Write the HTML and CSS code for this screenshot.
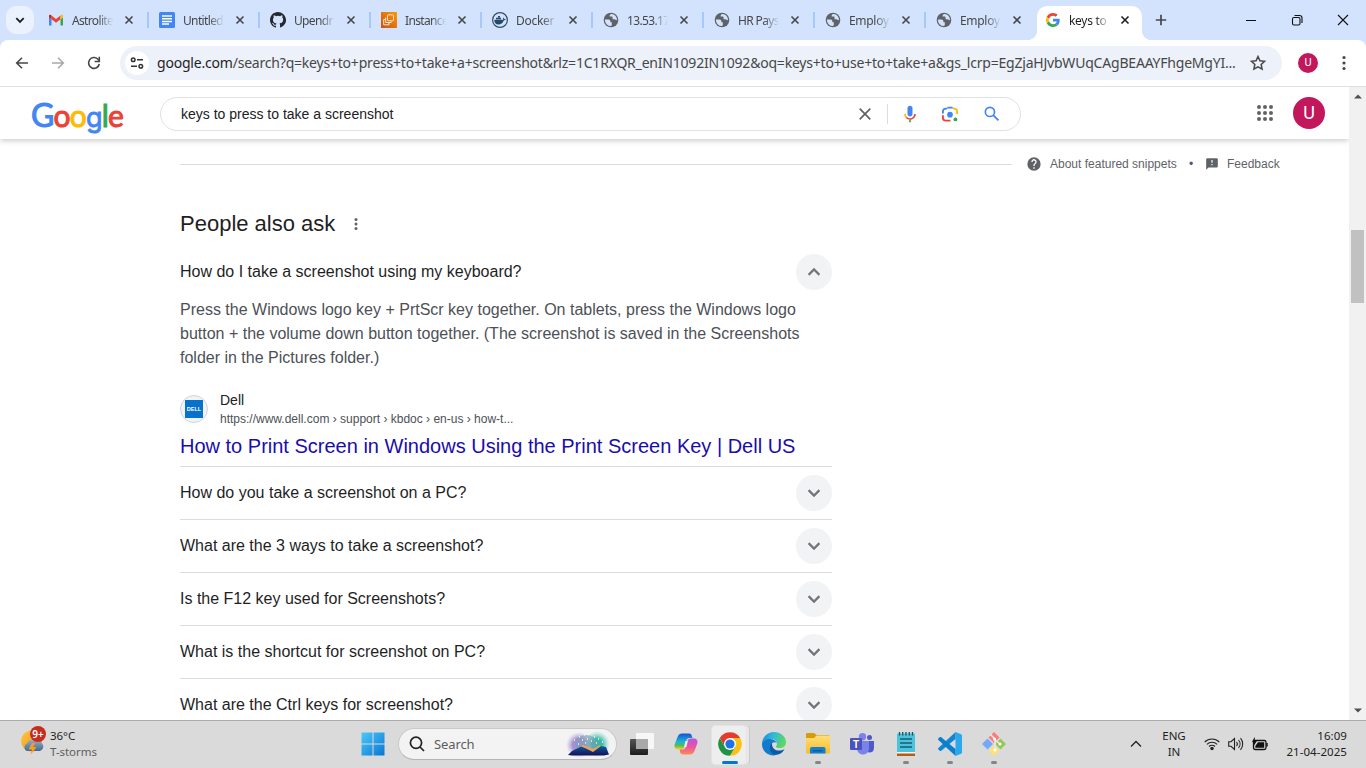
FILE: index.html
```html
<!DOCTYPE html>
<html lang="en">
<head>
<meta charset="utf-8">
<title>keys to press to take a screenshot - Google Search</title>
<link rel="stylesheet" href="styles.css">
</head>
<body>
<svg class="defs" width="0" height="0" aria-hidden="true">
  <defs>
    <symbol id="globe" viewBox="0 0 16 16"><circle cx="8" cy="8" r="7.300" fill="#5f6368"/><path d="M1.900 7.600h3.500c1.400 0 2 .9 2 2v.6h1.400v2.600c0 .5-.3 1-.8 1.300A6.100 6.100 0 0 1 1.900 7.600z" fill="#d3e3fd"/><path d="M8.600 2c-.9 0-1.900.6-1.900 1.600v1h1.700c.8 0 1.200.5 1.200 1.200v1.400h1.900c.6 0 1 .4 1.300.9.500.4 1 .1 1.200-.5C13.800 4.500 11.500 2.100 8.600 2z" fill="#d3e3fd"/></symbol>
    <symbol id="x" viewBox="0 0 10 10"><path d="M1.500 1.500l7 7m0-7l-7 7" fill="none" stroke="currentColor" stroke-width="1.600"/></symbol>
    <symbol id="gicon" viewBox="0 0 48 48"><path fill="#ea4335" d="M24 9.500c3.540 0 6.710 1.220 9.210 3.600l6.850-6.850C35.900 2.380 30.470 0 24 0 14.620 0 6.510 5.380 2.560 13.220l7.980 6.190C12.430 13.720 17.740 9.500 24 9.500z"/><path fill="#4285f4" d="M46.980 24.550c0-1.570-.15-3.090-.38-4.550H24v9.020h12.940c-.58 2.960-2.260 5.480-4.780 7.180l7.730 6c4.510-4.180 7.090-10.360 7.090-17.650z"/><path fill="#fbbc05" d="M10.530 28.590A14.500 14.500 0 0 1 9.770 24c0-1.600.27-3.140.76-4.590l-7.980-6.190A23.900 23.900 0 0 0 0 24c0 3.880.92 7.540 2.560 10.780z"/><path fill="#34a853" d="M24 48c6.480 0 11.930-2.130 15.890-5.810l-7.730-6c-2.150 1.450-4.920 2.300-8.160 2.300-6.260 0-11.570-4.220-13.470-9.910l-7.980 6.190C6.510 42.620 14.620 48 24 48z"/></symbol>
    <symbol id="chev" viewBox="0 0 24 24"><path fill="#70757a" stroke="#70757a" stroke-width=".4" d="M7.410 8.590L12 13.170l4.590-4.580L18 10l-6 6-6-6z"/></symbol>
  </defs>
</svg>

<header class="tabstrip">
  <button class="tabsearch"><svg width="10" height="10" viewBox="0 0 10 10"><path d="M1.300 3.200L5 6.900l3.700-3.700" fill="none" stroke="#1f1f1f" stroke-width="1.800"/></svg></button>
  <div class="tabs">
    <div class="tab"><svg class="fav" viewBox="0 0 16 16"><path fill="#4285f4" d="M1 13.500h2.500V7.300L1 5.400z"/><path fill="#34a853" d="M12.500 13.500H15V5.400l-2.500 1.900z"/><path fill="#ea4335" d="M3.500 7.300V3.600L8 7l4.500-3.400v3.700L8 10.700z"/><path fill="#c5221f" d="M1 5.400V4c0-1.400 1.500-1.600 2.500-.4v3.700z"/><path fill="#fbbc04" d="M15 5.400V4c0-1.400-1.500-1.600-2.500-.4v3.700z"/></svg><span class="label snug">Astrolite</span><svg class="close"><use href="#x"/></svg></div>
    <div class="tab"><svg class="fav" viewBox="0 0 16 16"><rect width="16" height="16" rx="1.500" fill="#4285f4"/><path d="M3 4h10M3 6.700h10M3 9.400h10M3 12.100h7" stroke="#fff" stroke-width="1.500"/></svg><span class="label snug">Untitled</span><svg class="close"><use href="#x"/></svg></div>
    <div class="tab"><svg class="fav" viewBox="0 0 16 16"><path fill="#24292f" d="M8 0C3.580 0 0 3.580 0 8c0 3.540 2.290 6.530 5.470 7.590.4.070.55-.17.55-.38v-1.490c-2.010.37-2.530-.49-2.690-.94-.09-.23-.48-.94-.82-1.130-.28-.15-.68-.52-.01-.53.630-.010 1.080.58 1.230.82.72 1.210 1.870.87 2.330.66.070-.52.28-.87.510-1.070-1.780-.2-3.640-.89-3.640-3.950 0-.87.310-1.590.82-2.150-.08-.2-.36-1.020.08-2.120 0 0 .67-.21 2.200.82a7.600 7.600 0 0 1 4 0c1.530-1.040 2.200-.82 2.200-.82.44 1.100.16 1.920.08 2.120.51.56.82 1.270.82 2.150 0 3.070-1.870 3.750-3.650 3.950.29.25.54.73.54 1.480v2.190c0 .21.15.46.55.38A8 8 0 0 0 8 0z"/></svg><span class="label snug">Upendr</span><svg class="close"><use href="#x"/></svg></div>
    <div class="tab"><svg class="fav" viewBox="0 0 16 16"><defs><linearGradient id="ec" y1="1" x2="1" y2="0"><stop stop-color="#c8511b"/><stop offset="1" stop-color="#f90"/></linearGradient></defs><rect width="16" height="16" fill="url(#ec)"/><rect x="6.500" y="2.800" width="6" height="6" rx=".8" fill="none" stroke="#ffe6cc"/><path d="M4.700 5.500v5h5.500V9.500M2.700 7.500v5.300h5.300v-2M2.700 7.500h1.500" fill="none" stroke="#ffe6cc"/></svg><span class="label snug">Instance</span><svg class="close"><use href="#x"/></svg></div>
    <div class="tab"><svg class="fav" viewBox="0 0 16 16"><circle cx="8" cy="8" r="7.400" fill="#d3e3fd" stroke="#344e65" stroke-width="1.200"/><path fill="#244a68" d="M2.300 7.700h8.800c.3-.8.100-1.500-.2-2.100.9.200 1.300.8 1.400 1.400.5-.1 1.200 0 1.500.2-.4.800-1.200 1-1.900 1-1.100 3-3 4.200-5.400 4.200-2.700 0-4.300-1.500-4.200-4.700zM4 5.800h5v1.500H4zM6 4h2v1.500H6z"/></svg><span class="label">Docker</span><svg class="close"><use href="#x"/></svg></div>
    <div class="tab"><svg class="fav"><use href="#globe"/></svg><span class="label snug">13.53.17</span><svg class="close"><use href="#x"/></svg></div>
    <div class="tab"><svg class="fav"><use href="#globe"/></svg><span class="label snug">HR Pays</span><svg class="close"><use href="#x"/></svg></div>
    <div class="tab"><svg class="fav"><use href="#globe"/></svg><span class="label">Employ</span><svg class="close"><use href="#x"/></svg></div>
    <div class="tab nosep"><svg class="fav"><use href="#globe"/></svg><span class="label">Employ</span><svg class="close"><use href="#x"/></svg></div>
    <div class="tab active"><svg class="fav g"><use href="#gicon"/></svg><span class="label">keys to</span><svg class="close"><use href="#x"/></svg></div>
  </div>
  <svg class="newtab" width="12" height="12" viewBox="0 0 12 12"><path d="M6 .8v10.400M.8 6h10.400" stroke="#474747" stroke-width="1.700"/></svg>
  <div class="winctl">
    <svg width="12" height="12" viewBox="0 0 12 12"><path d="M1 6.500h10" stroke="#111"/></svg>
    <svg width="12" height="12" viewBox="0 0 12 12"><rect x="1.500" y="3.500" width="7.500" height="7.500" rx="1.500" fill="none" stroke="#111" stroke-width="1.100"/><path d="M3.500 1.500H8.500a2.500 2.500 0 0 1 2.500 2.500v5" fill="none" stroke="#111" stroke-width="1.100"/></svg>
    <svg width="12" height="12" viewBox="0 0 12 12"><path d="M1 1l10 10M11 1L1 11" stroke="#111" stroke-width="1.100"/></svg>
  </div>
</header>

<nav class="toolbar">
  <svg class="nav" viewBox="0 0 16 16"><path d="M14 8H3M8 2.700L2.700 8 8 13.300" fill="none" stroke="#474747" stroke-width="1.600"/></svg>
  <svg class="nav" viewBox="0 0 16 16"><path d="M2 8h11M8 2.700L13.300 8 8 13.300" fill="none" stroke="#a9a9a9" stroke-width="1.600"/></svg>
  <svg class="nav" viewBox="0 0 16 16"><path d="M13.300 9A5.400 5.400 0 1 1 11.900 4.200L13.200 5.500" fill="none" stroke="#474747" stroke-width="1.600"/><path d="M13.300 1.800v4.700H8.600" fill="none" stroke="#474747" stroke-width="1.600"/></svg>
  <div class="omnibox">
    <span class="siteinfo"><svg width="14" height="14" viewBox="0 0 14 14" fill="none" stroke="#333" stroke-width="1.500"><circle cx="3.200" cy="3.800" r="1.800"/><path d="M7 3.800h6M1 10.200h6"/><circle cx="10.800" cy="10.200" r="1.800"/></svg></span>
    <span class="url"><b>google.com</b>/search?q=keys+to+press+to+take+a+screenshot&amp;rlz=1C1RXQR_enIN1092IN1092&amp;oq=keys+to+use+to+take+a&amp;gs_lcrp=EgZjaHJvbWUqCAgBEAAYFhgeMgYI...</span>
    <svg class="star" viewBox="0 0 16 16"><path d="M8 1.500l1.950 4.300 4.650.5-3.450 3.150.95 4.650L8 11.750 3.900 14.100l.95-4.650L1.400 6.300l4.650-.5z" fill="none" stroke="#474747" stroke-width="1.500"/></svg>
  </div>
  <span class="profile">U</span>
  <svg class="menu" width="4" height="16" viewBox="0 0 4 16" fill="#474747"><circle cx="2" cy="2.500" r="1.600"/><circle cx="2" cy="8" r="1.600"/><circle cx="2" cy="13.500" r="1.600"/></svg>
</nav>

<div class="viewport">
  <div class="page">
    <div class="ghead">
      <div class="glogo"><i class="b big">G</i><i class="r">o</i><i class="y">o</i><i class="b low">g</i><i class="gr">l</i><i class="r">e</i></div>
      <div class="gsearch">
        <span class="query">keys to press to take a screenshot</span>
        <svg class="clear" width="14" height="14" viewBox="0 0 14 14"><path d="M1.700 1.700l10.600 10.600m0-10.600L1.700 12.300" stroke="#5f6368" stroke-width="1.700"/></svg>
        <span class="vline"></span>
        <svg class="gi" viewBox="0 0 24 24"><path fill="#4285f4" d="M12 15c1.660 0 3-1.310 3-2.970V5.020C15 3.340 13.660 2 12 2S9 3.340 9 5.020v7.010C9 13.690 10.340 15 12 15z"/><path fill="#34a853" d="M11 18.920h2V22h-2z"/><path fill="#fbbc04" d="M7 12H5c0 1.930.78 3.680 2.050 4.950l1.410-1.410A5 5 0 0 1 7 12z"/><path fill="#ea4335" d="M12 16.950a4.900 4.900 0 0 1-3.540-1.420l-1.410 1.410A7 7 0 0 0 12 19c3.870 0 6.990-3.140 6.990-7h-2a4.970 4.970 0 0 1-4.990 4.950z"/></svg>
        <svg class="gi" viewBox="0 0 24 24" fill="none" stroke-width="2.200"><circle cx="12" cy="12.800" r="3.400" fill="#4285f4"/><path d="M7.800 5.500L9.500 3.200h5l1.700 2.300z" fill="#4285f4"/><path d="M15.500 5.600H17a3.500 3.500 0 0 1 3.500 3.500v3" stroke="#fbbc04"/><path d="M8.500 5.600H7a3.500 3.500 0 0 0-3.500 3.500v2.400" stroke="#4285f4"/><path d="M3.500 13.500v3A3.500 3.500 0 0 0 7 20h5.500" stroke="#ea4335"/><circle cx="18.500" cy="18.500" r="2.300" fill="#34a853"/></svg>
        <svg class="gi" viewBox="0 0 24 24"><path fill="#4285f4" d="M20.490 19l-5.730-5.730C15.530 12.200 16 10.910 16 9.500A6.500 6.500 0 1 0 9.500 16c1.410 0 2.700-.47 3.770-1.240L19 20.490 20.490 19zM5 9.500a4.500 4.500 0 1 1 9 0 4.500 4.500 0 0 1-9 0z"/></svg>
      </div>
      <svg class="apps" width="24" height="24" viewBox="0 0 24 24" fill="#5f6368"><path d="M6 8a2 2 0 1 0 0-4 2 2 0 0 0 0 4zm6 0a2 2 0 1 0 0-4 2 2 0 0 0 0 4zm6 0a2 2 0 1 0 0-4 2 2 0 0 0 0 4zM6 14a2 2 0 1 0 0-4 2 2 0 0 0 0 4zm6 0a2 2 0 1 0 0-4 2 2 0 0 0 0 4zm6 0a2 2 0 1 0 0-4 2 2 0 0 0 0 4zM6 20a2 2 0 1 0 0-4 2 2 0 0 0 0 4zm6 0a2 2 0 1 0 0-4 2 2 0 0 0 0 4zm6 0a2 2 0 1 0 0-4 2 2 0 0 0 0 4z"/></svg>
      <span class="avatar">U</span>
    </div>

    <div class="snipbar">
      <span class="rule"></span>
      <svg width="16" height="16" viewBox="0 0 24 24"><path fill="#5f6368" d="M12 2a10 10 0 1 0 0 20 10 10 0 0 0 0-20zm1 17h-2v-2h2v2zm2.070-7.750l-.9.920C13.450 12.900 13 13.500 13 15h-2v-.5c0-1.100.45-2.100 1.170-2.830l1.240-1.260A2 2 0 1 0 10 9H8a4 4 0 1 1 7.070 2.250z"/></svg>
      <span class="about">About featured snippets</span><span class="dot">•</span>
      <svg class="fbi" width="14" height="14" viewBox="0 0 24 24"><path fill="#5f6368" d="M20 2H4a2 2 0 0 0-2 2v18l4-4h14a2 2 0 0 0 2-2V4a2 2 0 0 0-2-2zm-7 12h-2v-2h2v2zm0-4h-2V5h2v5z"/></svg>
      <span>Feedback</span>
    </div>

    <main class="paa">
      <h2>People also ask<svg width="4" height="14" viewBox="0 0 4 14" fill="#5f6368"><circle cx="2" cy="2.500" r="1.500"/><circle cx="2" cy="7" r="1.500"/><circle cx="2" cy="11.500" r="1.500"/></svg></h2>
      <div class="q first"><span>How do I take a screenshot using my keyboard?</span><span class="btn up"><svg><use href="#chev"/></svg></span></div>
      <p class="answer">Press the Windows logo key + PrtScr key together. On tablets, press the Windows logo<br>button + the volume down button together. (The screenshot is saved in the Screenshots<br>folder in the Pictures folder.)</p>
      <div class="source">
        <span class="dell"><span>DELL</span></span>
        <div><div class="site">Dell</div><div class="crumb">https://www.dell.com › support › kbdoc › en-us › how-t...</div></div>
      </div>
      <a class="title">How to Print Screen in Windows Using the Print Screen Key | Dell US</a>
      <div class="q"><span>How do you take a screenshot on a PC?</span><span class="btn"><svg><use href="#chev"/></svg></span></div>
      <div class="q"><span>What are the 3 ways to take a screenshot?</span><span class="btn"><svg><use href="#chev"/></svg></span></div>
      <div class="q"><span>Is the F12 key used for Screenshots?</span><span class="btn"><svg><use href="#chev"/></svg></span></div>
      <div class="q"><span>What is the shortcut for screenshot on PC?</span><span class="btn"><svg><use href="#chev"/></svg></span></div>
      <div class="q"><span>What are the Ctrl keys for screenshot?</span><span class="btn"><svg><use href="#chev"/></svg></span></div>
    </main>
  </div>
  <div class="scroll">
    <svg class="arr" width="8" height="5" viewBox="0 0 8 5"><path d="M0 4.500L4 .5l4 4z" fill="#505050"/></svg>
    <div class="thumb"></div>
    <svg class="arr down" width="8" height="5" viewBox="0 0 8 5"><path d="M0 .5l4 4 4-4z" fill="#505050"/></svg>
  </div>
</div>

<footer class="taskbar">
  <div class="weather">
    <svg width="28" height="32" viewBox="0 0 28 32"><defs><linearGradient id="sun" y1="0" x2="1" y2="1"><stop stop-color="#fdc83d"/><stop offset="1" stop-color="#f08a1d"/></linearGradient><linearGradient id="cl" x2="0" y2="1"><stop stop-color="#8fb0cc"/><stop offset="1" stop-color="#44698f"/></linearGradient></defs><circle cx="11.500" cy="15" r="10.500" fill="url(#sun)"/><path d="M7 25a4 4 0 0 1 0-7.500 6 6 0 0 1 10.500-1.300A4.500 4.500 0 0 1 20 25z" fill="url(#cl)"/><path d="M12 17l-3.500 6.500H12L10.500 29l6-8H13l2.500-4z" fill="#fb9b23"/><circle cx="18" cy="8" r="8" fill="#c62b1f"/><text x="18" y="11.500" text-anchor="middle" class="badge">9+</text></svg>
    <div><div class="temp">36°C</div><div class="cond">T-storms</div></div>
  </div>
  <div class="apps-row">
    <span class="app start"><svg width="24" height="24" viewBox="0 0 24 24"><defs><linearGradient id="win" x2="1" y2="1"><stop stop-color="#4cc9fb"/><stop offset="1" stop-color="#0a75d1"/></linearGradient></defs><path fill="url(#win)" d="M.5.500h11v11H.5zM12.500.500h11v11h-11zM.5 12.500h11v11H.5zM12.500 12.500h11v11h-11z"/></svg></span>
    <div class="tsearch">
      <svg width="16" height="16" viewBox="0 0 16 16" fill="none" stroke="#222" stroke-width="1.700"><circle cx="7" cy="6.800" r="5.600"/><path d="M11 11l4 4"/></svg>
      <span>Search</span>
      <svg class="art" width="44" height="26" viewBox="0 0 44 26"><defs><radialGradient id="gl"><stop offset=".5" stop-color="#a78fd0"/><stop offset="1" stop-color="#b7b3e8" stop-opacity="0"/></radialGradient><radialGradient id="gt"><stop offset=".4" stop-color="#3cb7a8"/><stop offset="1" stop-color="#70d6c5" stop-opacity="0"/></radialGradient><linearGradient id="hill" x2="0" y2="1"><stop stop-color="#0c5d9c"/><stop offset="1" stop-color="#141059"/></linearGradient></defs><ellipse cx="13" cy="14" rx="13" ry="13" fill="url(#gl)"/><ellipse cx="31" cy="13" rx="13" ry="13" fill="url(#gt)"/><ellipse cx="20" cy="12" rx="11" ry="8" fill="#7b9ebc" opacity=".6"/><path d="M9 19l8-5 5 2 5 2 7-4 5 6-5 3H8z" fill="#f3a04f"/><path d="M2 24l4-4 9-4.500 5 2 7 3.500 8-6 5 1 3 7.500-5 1H6z" fill="url(#hill)"/><path d="M8 9h1M13 6h1M18 4h1M23 3h1M28 6h1M32 8h1M36 11h1M16 9h1M21 8h1M25 10h1M12 13h1M19 12h1M30 12h1" stroke="#fff6cf" stroke-width="1.300"/></svg>
    </div>
    <span class="app"><svg width="24" height="24" viewBox="0 0 24 24"><defs><linearGradient id="tv" x2="0" y2="1"><stop stop-color="#555"/><stop offset="1" stop-color="#1d1d1d"/></linearGradient></defs><rect y="7" width="18" height="16" rx="1" fill="url(#tv)"/><rect x="6" y="1" width="18" height="16" rx="1" fill="#f7f7f7"/><path d="M6 7h12v10H6z" fill="#a9a9a9"/></svg></span>
    <span class="app"><svg width="24" height="24" viewBox="0 0 24 24"><defs><linearGradient id="cpa" x2="0" y2="1"><stop stop-color="#1b4fd1"/><stop offset=".5" stop-color="#18b5d8"/><stop offset=".75" stop-color="#55bb55"/><stop offset="1" stop-color="#ffd21c"/></linearGradient><linearGradient id="cpb" x2="0" y2="1"><stop stop-color="#b255e8"/><stop offset=".55" stop-color="#f0559d"/><stop offset="1" stop-color="#fb8c50"/></linearGradient></defs><path d="M8 1.500h7c2 0 2.500 1 3 3l.5 1.500h-3C13 6 12.500 8 12 10l-1 4c-.8 2.500-2 3.500-4 3.500H4C1 17.500 0 15 .7 12.500L3.500 5C4.500 2.500 6 1.500 8 1.500z" fill="url(#cpa)"/><path d="M16 22.500H9c-2 0-2.500-1-3-3l-.5-2h3c2.500 0 3-1.500 3.500-3.500l1-4c.8-2.500 2-3.500 4-3.500h3c3 0 4 2.500 3.300 5L20.500 19c-1 2.500-2.500 3.500-4.500 3.500z" fill="url(#cpb)"/><path d="M11.500 9h2.300l-1.500 6H10z" fill="#eee"/></svg></span>
    <span class="app on"><svg width="24" height="24" viewBox="0 0 24 24"><circle cx="12" cy="12" r="11.800" fill="#fff"/><path fill="#e33b2e" d="M1.780 6.100A11.800 11.800 0 0 1 22.220 6.100H12L6.890 14.950z"/><path fill="#fbc116" d="M22.220 6.100A11.800 11.800 0 0 1 12 23.800L17.110 14.950 12 6.100z"/><path fill="#229342" d="M12 23.800A11.800 11.800 0 0 1 1.780 6.100L6.890 14.950H17.110z"/><circle cx="12" cy="12" r="6" fill="#fff"/><circle cx="12" cy="12" r="4.600" fill="#1a73e8"/></svg></span>
    <span class="app"><svg width="24" height="24" viewBox="0 0 24 24"><defs><linearGradient id="ed" x2="1" y2=".3"><stop stop-color="#1488d8"/><stop offset=".5" stop-color="#31b9dc"/><stop offset="1" stop-color="#5dd764"/></linearGradient></defs><path fill="url(#ed)" d="M0 12C0 5 5.400 0 12 0s12 4.500 12 10c0 4-3 6-6 6-2.500 0-4-.7-4-1.600 0-.5 1-1.100 1-2.700C15 9 12 7 8.500 7 4 7 1 9.500 0 12z"/><path fill="#127acb" d="M0 12c.6-3 3.700-5 7.500-5C11 7 14 8.500 15 11.500c-1-1.400-2.500-1.500-3.700-.9C8 12 8 20 15 21.500c-1 1.500-2.500 2-3.500 2C5 23.500 0 18.500 0 12z"/><path fill="#0c59a4" d="M10 11.200C7.500 13 7 18 10 21c2 2 5 2.500 8 .8 2-1 3.600-2.600 4.500-4.500-5 2.500-13 1.500-12.500-6.100z"/></svg></span>
    <span class="app run"><svg width="24" height="24" viewBox="0 0 24 24"><defs><linearGradient id="fo" x2="0" y2="1"><stop stop-color="#ffdf75"/><stop offset="1" stop-color="#f9bb2d"/></linearGradient></defs><path fill="#d69b0c" d="M0 2.500C0 1.700.7 1 1.500 1H8l2.500 2H22c1 0 2 .7 2 1.500V10H0z"/><path fill="url(#fo)" d="M0 6h8l2.500-2.500H24V20a1.500 1.500 0 0 1-1.500 1.500h-21A1.500 1.500 0 0 1 0 20z"/><path fill="#1380cf" d="M4 21.500V17c0-1.200.8-2 2-2h11.500c1.200 0 2 .8 2 2v4.500z"/><path fill="#0a5c9f" d="M7 18h9.500v1.500H7z"/></svg></span>
    <span class="app"><svg width="24" height="24" viewBox="0 0 24 24"><circle cx="12.500" cy="4.800" r="3.700" fill="#7b83eb"/><circle cx="19.500" cy="5.500" r="2.500" fill="#5059c9"/><path d="M16 9h8v7c0 3-2 4.500-4.500 4.500S16 19 16 16z" fill="#5059c9"/><path d="M7 9h12v7c0 4-2.500 6.500-6 6.500S7 20 7 16z" fill="#7b83eb"/><rect y="6" width="12" height="12" rx="1" fill="#4b53bc"/><text x="6" y="15.500" text-anchor="middle" class="tt">T</text></svg></span>
    <span class="app run"><svg width="24" height="24" viewBox="0 0 24 24"><rect x="3" y="1.500" width="18" height="20" rx="1" fill="#4bc3dc"/><path d="M3 21h18v3H3z" fill="#b75b12"/><path d="M3 20h18v1.500H3z" fill="#f4f4f4"/><path d="M5.500 0v3.500m3.200-3.500v3.500M12 0v3.500M15.300 0v3.500M18.500 0v3.500" stroke="#105766" stroke-width="1.300"/><path d="M6 7h12M6 11h12M6 15h12" stroke="#155f70" stroke-width="1.500"/></svg></span>
    <span class="app run"><svg width="24" height="24" viewBox="0 0 24 24"><path d="M17.500 0L23 2.300c.6.300 1 .8 1 1.500v16.400c0 .7-.4 1.200-1 1.500L17.500 24z" fill="#29a8ee"/><path d="M17.500 0v7L3.300 18.800c-.5.400-1.100.4-1.600 0L.4 17.600c-.5-.5-.5-1.100 0-1.600z" fill="#1685cf"/><path d="M17.500 24v-7L3.300 5.200c-.5-.4-1.100-.4-1.600 0L.4 6.400c-.5.500-.5 1.100 0 1.600z" fill="#0a7fcb"/></svg></span>
    <span class="app run"><svg width="24" height="24" viewBox="0 0 24 24"><path d="M12 0l5.500 5.500L12 11 6.500 5.500z" fill="#ff7b78"/><path d="M5.500 6.500L11 12l-5.500 5.500L0 12z" fill="#74a8fb"/><path d="M18.500 6.500L24 12l-5.500 5.500L13 12z" fill="#91c954"/><path d="M12 13l5.500 5.500L12 24l-5.500-5.500z" fill="#ffe07a"/><path d="M8 2l5 5v11M13 8l5 4" stroke="#eceae4" stroke-width="1.500" fill="none"/><circle cx="12.500" cy="7" r="1.500" fill="#fff"/><circle cx="18" cy="12" r="1.500" fill="#fff"/><circle cx="13" cy="18" r="1.500" fill="#fff"/></svg></span>
  </div>
  <div class="tray">
    <svg class="up" width="12" height="8" viewBox="0 0 12 8"><path d="M1 6.500l5-5 5 5" fill="none" stroke="#222" stroke-width="1.300"/></svg>
    <div class="lang">ENG<br>IN</div>
    <svg width="16" height="14" viewBox="0 0 16 14" fill="none" stroke="#222" stroke-width="1.100"><path d="M.7 5a10.300 10.300 0 0 1 14.600 0M2.900 7.300a7.200 7.200 0 0 1 10.200 0M5 9.500a4.200 4.200 0 0 1 6 0"/><circle cx="8" cy="11.500" r="1.200" fill="#222"/></svg>
    <svg width="16" height="14" viewBox="0 0 16 14" fill="none" stroke="#222" stroke-width="1.100"><path d="M.7 4.700h2.300L6.500 1.500v11L3 9.300H.7zM8.500 5a3 3 0 0 1 0 4M10.500 3a6 6 0 0 1 0 8M12.500 1.200a8.800 8.800 0 0 1 0 11.600"/></svg>
    <svg width="16" height="14" viewBox="0 0 16 14"><rect x="1.500" y="3.500" width="12.500" height="9" rx="1.700" fill="none" stroke="#111" stroke-width="1.300"/><path d="M6 5.300h6.200v5.400H3.300V9zM14.300 6h1.400v3.500h-1.400z" fill="#111"/><path d="M2.600 0L0 5h2v3.500L5 3.700H3z" fill="#111"/></svg>
    <div class="clock">16:09<br>21-04-2025</div>
  </div>
</footer>
</body>
</html>
```
FILE: styles.css
```css
* { box-sizing: border-box; }
body { margin: 0; width: 1366px; height: 768px; overflow: hidden; display: flex; flex-direction: column; background: #fff; font-family: "Liberation Sans", Arial, sans-serif; color: #1f1f1f; }
svg { display: block; flex: none; }
.defs { position: absolute; }

.tabstrip { height: 40px; flex: none; display: flex; align-items: center; background: #d3e3fd; padding-left: 6px; font-family: "Noto Sans", sans-serif; }
.tabsearch { width: 28px; height: 28px; border: 0; padding: 0; border-radius: 10px; background: #ebf1fd; display: flex; align-items: center; justify-content: center; margin-right: 3px; }
.tabs { display: flex; height: 40px; }
.tab { position: relative; width: 111px; display: flex; align-items: center; padding-left: 11px; color: #474747; }
.tab:not(.nosep):not(.active)::after { content: ""; position: absolute; right: -1px; top: 12px; width: 2px; height: 16px; background: #a8c7fa; }
.fav { width: 16px; height: 16px; }
.fav.g { width: 14px; height: 14px; }
.label { width: 42px; margin: 1px 10px 0 8px; font-size: 12px; letter-spacing: -.3px; white-space: nowrap; -webkit-mask-image: linear-gradient(90deg, #000 62%, transparent 98%); mask-image: linear-gradient(90deg, #000 62%, transparent 98%); }
.label.snug { letter-spacing: -.65px; }
.close { width: 10px; height: 10px; }
.tab.active { width: 105px; height: 34px; margin: 6px 0 0 1px; padding-left: 9px; padding-bottom: 6px; background: #fff; border-radius: 10px 10px 0 0; color: #1f1f1f; }
.tab.active .label { margin-left: 9px; margin-right: 9px; }
.tab.active::before, .tab.active::after { content: ""; position: absolute; bottom: 0; width: 10px; height: 10px; }
.tab.active::before { left: -10px; background: radial-gradient(circle at 0 0, transparent 10px, #fff 10.5px); }
.tab.active::after { right: -10px; background: radial-gradient(circle at 100% 0, transparent 10px, #fff 10.5px); }
.newtab { margin-left: 13px; }
.winctl { margin-left: auto; padding-right: 17px; display: flex; gap: 34px; }

.toolbar { height: 47px; flex: none; display: flex; align-items: center; border-bottom: 1px solid #dcdfe3; padding-left: 14px; background: linear-gradient(#d3e3fd, #d3e3fd) 0 0 / 100% 8px no-repeat; position: relative; z-index: 0; }
.toolbar::before { content: ""; position: absolute; inset: 0; z-index: -1; background: #fff; border-radius: 8px 8px 0 0; }
.nav { width: 16px; height: 16px; margin-right: 20px; }
.omnibox { width: 1162px; height: 34px; margin-left: -2px; border-radius: 17px; background: #ecf1fa; display: flex; align-items: center; padding-left: 5px; }
.siteinfo { width: 24px; height: 24px; border-radius: 50%; background: #fff; display: flex; align-items: center; justify-content: center; }
.url { width: 1082px; margin: 0 0 2px 8px; font-family: "Noto Sans", sans-serif; font-size: 14px; letter-spacing: -.205px; color: #474747; white-space: nowrap; }
.url b { font-weight: 400; color: #1f1f1f; }
.star { width: 16px; height: 16px; margin-left: 11px; }
.profile { width: 20px; height: 20px; margin-left: 16px; border-radius: 50%; background: #c2185b; color: #fff; font: 11px/20px Roboto, sans-serif; text-align: center; }
.menu { margin-left: 24px; }

.viewport { flex: 1; min-height: 0; display: flex; }
.page { flex: 1; overflow: hidden; }
.ghead { position: relative; height: 52px; display: flex; align-items: center; background: #fff; box-shadow: 0 1px 6px rgba(32,33,36,.28); padding-left: 31px; }
.glogo { width: 129px; height: 52px; display: flex; align-items: baseline; font-family: Lato, sans-serif; font-size: 30px; line-height: 56px; letter-spacing: -.8px; }
.glogo i { font-style: normal; -webkit-text-stroke: 1px currentColor; }
.glogo .big { font-size: 32px; }
.glogo .low { font-family: Inter, sans-serif; font-size: 27px; line-height: 40px; -webkit-text-stroke-width: .8px; }
.b { color: #4285f4; } .r { color: #ea4335; } .y { color: #fbbc05; } .gr { color: #34a853; }
.gsearch { width: 861px; height: 34px; margin-top: 2px; border: 1px solid #dfe1e5; border-radius: 17px; display: flex; align-items: center; padding-left: 20px; }
.query { width: 677px; flex: none; font-size: 14px; color: #202124; }
.vline { width: 1px; flex: none; height: 20px; background: #dadce0; margin: 0 12px 0 15px; }
.gi { width: 20px; height: 20px; margin-right: 20px; }
.gi + .gi + .gi { margin-left: 2px; }
.apps { margin-left: 232px; }
.avatar { width: 32px; height: 32px; margin-left: 16px; border-radius: 50%; background: #c2185b; color: #fff; font: 18px/32px Roboto, sans-serif; text-align: center; }
.snipbar { height: 50px; display: flex; align-items: center; padding-left: 180px; font-size: 12px; color: #5f6368; }
.rule { width: 832px; height: 1px; background: #dadce0; margin-right: 14px; }
.about { margin-left: 8px; width: 127px; }
.dot { width: 28px; text-align: center; color: #5f4d8d; }
.fbi { margin: 0 8px 0 0; }
.paa { width: 832px; padding-left: 180px; }
h2 { margin: 18px 0 12px; height: 34px; font-size: 22px; line-height: 34px; font-weight: 400; display: flex; align-items: center; }
h2 svg { margin-left: 19px; }
.q { height: 53px; border-top: 1px solid #dadce0; display: flex; align-items: center; justify-content: space-between; font-size: 16px; }
.q.first { height: 38px; border: 0; }
.btn { width: 36px; height: 36px; border-radius: 50%; background: #f1f3f4; display: flex; align-items: center; justify-content: center; }
.btn svg { width: 24px; height: 24px; }
.up svg { transform: rotate(180deg); }
.answer { margin: 7px 0 0; font-size: 16px; line-height: 24px; color: #4d5156; white-space: nowrap; }
.source { display: flex; align-items: center; margin-top: 20px; height: 38px; gap: 12px; }
.dell { width: 28px; height: 28px; border: 1px solid #d2d5da; border-radius: 50%; background: #f1f3f4; display: flex; align-items: center; justify-content: center; }
.dell span { width: 18px; height: 18px; background: #0672cb; color: #fff; font-size: 5.5px; line-height: 18px; font-weight: 700; text-align: center; }
.site { font-size: 14px; line-height: 20px; color: #202124; }
.crumb { font-size: 12px; line-height: 18px; color: #4d5156; }
.title { display: block; font-size: 20px; line-height: 26px; margin: 5px 0 7px; color: #1a0dab; white-space: nowrap; }
.scroll { width: 17px; background: #f1f1f1; display: flex; flex-direction: column; align-items: center; }
.arr { margin-top: 7px; }
.thumb { width: 13px; height: 73px; margin-top: 131px; background: #c1c1c1; }
.down { margin: auto 0 7px; }

.taskbar { height: 48px; flex: none; border-top: 1px solid #acacac; background: #dadada; display: flex; align-items: center; padding-bottom: 2px; font-family: "Noto Sans", sans-serif; position: relative; z-index: 1; }
.weather { width: 351px; padding-left: 21px; display: flex; align-items: center; gap: 2px; font-size: 11.5px; line-height: 16px; letter-spacing: -.05px; }
.cond { color: #5d5d5d; }
.weather svg { margin-top: -4px; margin-left: -1px; }
.badge { font: 600 10px "Noto Sans", sans-serif; fill: #fff; }
.apps-row { display: flex; align-items: center; }
.app { position: relative; width: 44px; height: 46px; display: flex; align-items: center; justify-content: center; }
.tsearch { width: 219px; height: 32px; margin: 0 3px 0 3px; border-radius: 16px; border: 1px solid #c9c9c9; border-bottom-color: #b5b5b5; background: #f3f3f3; display: flex; align-items: center; padding-left: 10px; font-size: 13px; color: #5d5d5d; letter-spacing: -.1px; }
.tsearch span { width: 132px; margin-left: 9px; }
.start { left: 0; }
.on::before { content: ""; position: absolute; z-index: -1; left: 3px; top: 4px; width: 34px; height: 38px; border: 1px solid #e4e4e4; background: #eee; border-radius: 4px; box-shadow: 3px 0 0 -1px #e8e8e8, 4px 0 0 -1px #c8c8c8; }
.on::after { content: ""; position: absolute; left: 14px; bottom: 3px; width: 16px; height: 3px; border-radius: 2px; background: #0078d4; }
.run::after { content: ""; position: absolute; left: 19px; bottom: 3px; width: 6px; height: 3px; border-radius: 2px; background: #858585; }
.tt { font: 700 10px "Liberation Sans", sans-serif; fill: #fff; }
.tray { margin-left: auto; padding-right: 19px; display: flex; align-items: center; gap: 8px; font-size: 11px; line-height: 16px; }
.lang { width: 34px; text-align: center; margin-left: 7px; margin-right: 5px; font-size: 11.5px; }
.clock { width: 68px; margin-left: 3px; text-align: right; white-space: nowrap; font-size: 11.500px; letter-spacing: .05px; }
```
